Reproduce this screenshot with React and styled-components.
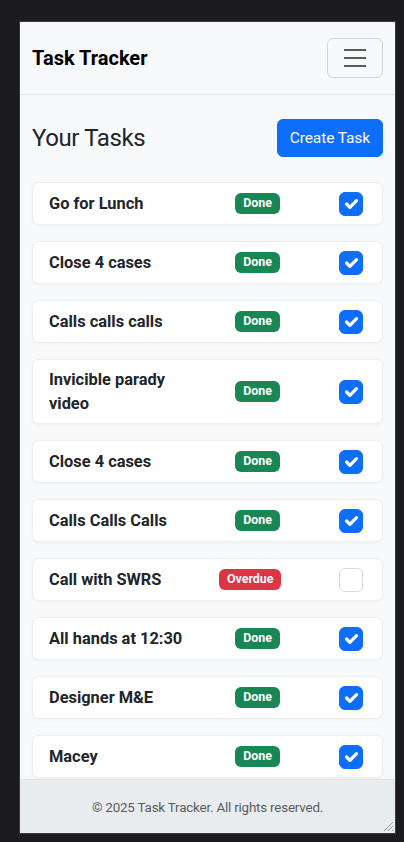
import React from "react";
import styled, { createGlobalStyle } from "styled-components";

const GlobalStyle = createGlobalStyle`
  * {
    box-sizing: border-box;
  }
  body {
    margin: 0;
    background: #1c1c1e;
    font-family: Roboto, "Liberation Sans", sans-serif;
  }
`;

const tasks = [
  { title: "Go for Lunch", status: "Done", done: true },
  { title: "Close 4 cases", status: "Done", done: true },
  { title: "Calls calls calls", status: "Done", done: true },
  { title: "Invicible parady video", status: "Done", done: true },
  { title: "Close 4 cases", status: "Done", done: true },
  { title: "Calls Calls Calls", status: "Done", done: true },
  { title: "Call with SWRS", status: "Overdue", done: false },
  { title: "All hands at 12:30", status: "Done", done: true },
  { title: "Designer M&E", status: "Done", done: true },
  { title: "Macey", status: "Done", done: true },
];

const Frame = styled.div`
  padding: 21px 8px 8px 19px;
  height: 842px;
`;

const Page = styled.div`
  position: relative;
  width: 377px;
  height: 813px;
  border: 1px solid #3a3a3d;
  background: #f8f9fa;
  display: flex;
  flex-direction: column;
  overflow: hidden;
`;

const Navbar = styled.nav`
  display: flex;
  align-items: center;
  justify-content: space-between;
  padding: 16px 12px;
  background: #f8f9fa;
  border-bottom: 1px solid #e3e6e9;
`;

const Brand = styled.div`
  font-size: 20px;
  font-weight: 700;
  color: #000;
  line-height: 30px;
`;

const Toggler = styled.button`
  width: 56px;
  height: 40px;
  padding: 4px 12px;
  border: 1px solid rgba(0, 0, 0, 0.15);
  border-radius: 6px;
  background: transparent;
  display: flex;
  align-items: center;
  justify-content: center;
`;

const Main = styled.main`
  flex: 1;
  overflow: hidden;
  padding: 24px 12px 0;
`;

const HeaderRow = styled.div`
  display: flex;
  align-items: center;
  justify-content: space-between;
  margin-bottom: 25px;
`;

const Heading = styled.h2`
  margin: 0;
  font-size: 24px;
  font-weight: 400;
  line-height: 1.2;
  letter-spacing: -0.4px;
  color: #212529;
`;

const CreateButton = styled.button`
  font-family: inherit;
  font-size: 15.5px;
  line-height: 24px;
  letter-spacing: -0.1px;
  padding: 6px 12px;
  color: #fff;
  background: #0d6efd;
  border: 1px solid #0d6efd;
  border-radius: 6px;
`;

const TaskList = styled.div`
  display: flex;
  flex-direction: column;
  gap: 16px;
`;

const Card = styled.div`
  background: #fff;
  border: 1px solid #eceef1;
  border-radius: 7px;
  box-shadow: 0 1px 3px rgba(0, 0, 0, 0.04);
  padding: 8px 16px;
  display: grid;
  grid-template-columns: 146px 61px 1fr;
  column-gap: 24px;
  align-items: center;
  min-height: 43px;
`;

const Title = styled.div`
  font-size: 16.4px;
  font-weight: 700;
  line-height: 23.5px;
  color: #212529;
`;

const BadgeCell = styled.div`
  text-align: right;
  white-space: nowrap;
  line-height: 0;
`;

const Badge = styled.span`
  display: inline-block;
  font-size: 12.4px;
  font-weight: 700;
  line-height: 1;
  padding: 4px 8px;
  border-radius: 6px;
  color: #fff;
  background: ${(p) => (p.$status === "Overdue" ? "#dc3545" : "#198754")};
`;

const CheckCell = styled.div`
  display: flex;
  justify-content: flex-end;
  padding-right: 3px;
`;

const CheckBox = styled.span`
  width: 24px;
  height: 24px;
  border-radius: 6px;
  display: flex;
  align-items: center;
  justify-content: center;
  background: ${(p) => (p.$checked ? "#0d6efd" : "#fff")};
  border: ${(p) => (p.$checked ? "1px solid #0d6efd" : "1.5px solid #d8dbdf")};
`;

const Footer = styled.footer`
  background: #e9ecef;
  border-top: 1px solid #dee2e6;
  padding: 17px 16px 15px;
  text-align: center;
  font-size: 13.4px;
  line-height: 21px;
  letter-spacing: -0.2px;
  color: #595c5f;
`;

const Grip = styled.svg`
  position: absolute;
  right: 1px;
  bottom: 1px;
`;

function TaskCard({ task }) {
  return (
    <Card>
      <Title>{task.title}</Title>
      <BadgeCell>
        <Badge $status={task.status}>{task.status}</Badge>
      </BadgeCell>
      <CheckCell>
        <CheckBox $checked={task.done}>
          {task.done && (
            <svg width="22" height="22" viewBox="0 0 20 20">
              <path
                d="m6 10 3 3 6-6"
                fill="none"
                stroke="#fff"
                strokeWidth="3"
                strokeLinecap="round"
                strokeLinejoin="round"
              />
            </svg>
          )}
        </CheckBox>
      </CheckCell>
    </Card>
  );
}

export default function App() {
  return (
    <>
      <GlobalStyle />
      <Frame>
        <Page>
          <Navbar>
            <Brand>Task Tracker</Brand>
            <Toggler aria-label="Toggle navigation">
              <svg width="30" height="30" viewBox="0 0 30 30">
                <path
                  d="M4 7h22M4 15h22M4 23h22"
                  stroke="rgba(33,37,41,0.75)"
                  strokeWidth="2"
                  strokeLinecap="butt"
                />
              </svg>
            </Toggler>
          </Navbar>
          <Main>
            <HeaderRow>
              <Heading>Your Tasks</Heading>
              <CreateButton>Create Task</CreateButton>
            </HeaderRow>
            <TaskList>
              {tasks.map((t, i) => (
                <TaskCard key={i} task={t} />
              ))}
            </TaskList>
          </Main>
          <Footer>© 2025 Task Tracker. All rights reserved.</Footer>
          <Grip width="13" height="13" viewBox="0 0 13 13">
            <path d="M12 3L3 12M12 7L7 12M12 11L11 12" stroke="#9a9a9a" strokeWidth="1" />
          </Grip>
        </Page>
      </Frame>
    </>
  );
}
